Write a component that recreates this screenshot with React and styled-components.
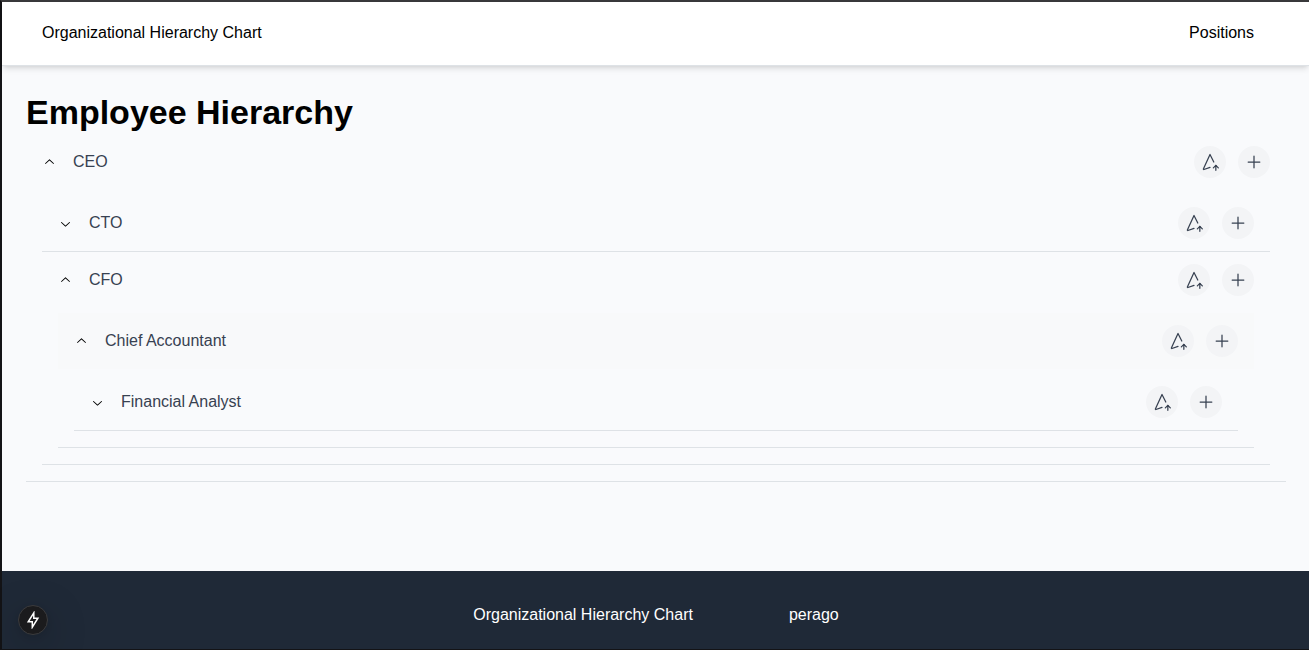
import React, { useId, useState } from "react";
import styled, { createGlobalStyle } from "styled-components";

const GlobalStyle = createGlobalStyle`
  *, *::before, *::after { box-sizing: border-box; }
  body {
    margin: 0;
    background: #f9fafc;
    color: #000;
    font-family: "Liberation Sans", Arial, sans-serif;
    font-size: 16px;
    line-height: 24px;
  }
  button { font: inherit; }
`;

const Page = styled.div`
  min-height: 100vh;
  display: flex;
  flex-direction: column;
  border: 0 solid #131316;
  border-width: 2px 0 1px 2px;
  border-top-color: #39393b;
`;

const Header = styled.header`
  display: flex;
  align-items: center;
  justify-content: space-between;
  height: 64px;
  padding: 0 55px 2px 40px;
  background: #fff;
  border-bottom: 1px solid #dee2e6;
  box-shadow: 0 4px 6px -1px rgba(0, 0, 0, 0.1), 0 2px 4px -2px rgba(0, 0, 0, 0.1);
`;

const NavLink = styled.a`
  color: inherit;
  text-decoration: none;
`;

const Main = styled.main`
  flex: 1;
  padding: 24px 23px 24px 24px;
`;

const Title = styled.h1`
  margin: 0;
  font-size: 34px;
  line-height: 44px;
  font-weight: 700;
`;

const Item = styled.div`
  border-bottom: 1px solid #dee2e6;
`;

const Row = styled.div`
  display: flex;
  align-items: center;
  gap: 12px;
  height: 56px;
  padding: 0 16px;
  background: ${(p) => (p.$highlighted ? "#f8f9fa" : "transparent")};
`;

const Toggle = styled.button`
  flex: 1;
  display: flex;
  align-items: center;
  gap: 16px;
  padding: 0;
  border: 0;
  background: none;
  color: #374151;
  text-align: left;
  cursor: pointer;
`;

const Chevron = styled.svg`
  width: 15px;
  height: 15px;
  color: #000;
  transform: ${(p) => (p.$open ? "rotate(180deg)" : "none")};
`;

const ActionButton = styled.button`
  display: flex;
  align-items: center;
  justify-content: center;
  width: 32px;
  height: 32px;
  padding: 0;
  border: 0;
  border-radius: 50%;
  background: #f3f4f6;
  color: #374151;
  cursor: pointer;
`;

const Icon = styled.svg`
  width: 20px;
  height: 20px;
  fill: none;
  stroke: currentColor;
  stroke-width: 1.5;
  stroke-linecap: round;
  stroke-linejoin: round;
`;

const Panel = styled.div`
  padding: 5px 16px 16px;
`;

const Footer = styled.footer`
  display: flex;
  justify-content: center;
  gap: 96px;
  padding: 32px 23px 22px 24px;
  background: #1f2937;
  color: #fff;
`;

const DevButton = styled.button`
  position: fixed;
  left: 18px;
  bottom: 15px;
  display: flex;
  align-items: center;
  justify-content: center;
  width: 30px;
  height: 30px;
  padding: 0;
  border: 1px solid #3b3b3d;
  border-radius: 50%;
  background: #1b1b1d;
  color: #fff;
  box-shadow: 0 11px 40px 0 rgba(0, 0, 0, 0.25), 0 2px 10px 0 rgba(0, 0, 0, 0.12);
`;

const BoltIcon = styled.svg`
  width: 16px;
  height: 18px;
  fill: none;
  stroke: currentColor;
  stroke-width: 1.5;
`;

const positions = [
  {
    name: "CEO",
    open: true,
    children: [
      { name: "CTO" },
      {
        name: "CFO",
        open: true,
        children: [
          {
            name: "Chief Accountant",
            open: true,
            highlighted: true,
            children: [{ name: "Financial Analyst" }],
          },
        ],
      },
    ],
  },
];

function PositionItem({ position }) {
  const [open, setOpen] = useState(Boolean(position.open));
  const panelId = useId();
  return (
    <Item>
      <Row $highlighted={position.highlighted}>
        <Toggle
          type="button"
          aria-expanded={open}
          aria-controls={panelId}
          onClick={() => setOpen(!open)}
        >
          <Chevron viewBox="0 0 15 15" $open={open} aria-hidden="true">
            <path
              d="M3.13523 6.15803C3.3241 5.95657 3.64052 5.94637 3.84197 6.13523L7.5 9.56464L11.158 6.13523C11.3595 5.94637 11.6759 5.95657 11.8648 6.15803C12.0536 6.35949 12.0434 6.67591 11.842 6.86477L7.84197 10.6148C7.64964 10.7951 7.35036 10.7951 7.15803 10.6148L3.15803 6.86477C2.95657 6.67591 2.94637 6.35949 3.13523 6.15803Z"
              fill="currentColor"
              fillRule="evenodd"
              clipRule="evenodd"
            />
          </Chevron>
          <span>{position.name}</span>
        </Toggle>
        <ActionButton type="button" aria-label={`Open ${position.name}`}>
          <Icon viewBox="0 0 24 24" aria-hidden="true">
            <path d="M16.54 11.97l-4.54 -8.97l-7.97 17.275c-.07 .2 -.017 .424 .135 .572c.15 .148 .374 .193 .57 .116l7.265 -2.463" />
            <path d="M19 22v-6" />
            <path d="M22 19l-3 -3l-3 3" />
          </Icon>
        </ActionButton>
        <ActionButton type="button" aria-label={`Add under ${position.name}`}>
          <Icon viewBox="0 0 24 24" aria-hidden="true">
            <path d="M12 5v14M5 12h14" />
          </Icon>
        </ActionButton>
      </Row>
      {open && position.children && (
        <Panel id={panelId}>
          {position.children.map((child) => (
            <PositionItem key={child.name} position={child} />
          ))}
        </Panel>
      )}
    </Item>
  );
}

export default function App() {
  return (
    <>
      <GlobalStyle />
      <Page>
        <Header>
          <NavLink href="#home">Organizational Hierarchy Chart</NavLink>
          <NavLink href="#positions">Positions</NavLink>
        </Header>
        <Main>
          <Title>Employee Hierarchy</Title>
          {positions.map((position) => (
            <PositionItem key={position.name} position={position} />
          ))}
        </Main>
        <Footer>
          <span>Organizational Hierarchy Chart</span>
          <span>perago</span>
        </Footer>
      </Page>
      <DevButton type="button" aria-label="Development status">
        <BoltIcon viewBox="0 0 16 18" aria-hidden="true">
          <path d="M8.8 1.8L3.2 10.8H7.3V16.2L12.9 7.2H8.8Z" />
        </BoltIcon>
      </DevButton>
    </>
  );
}
